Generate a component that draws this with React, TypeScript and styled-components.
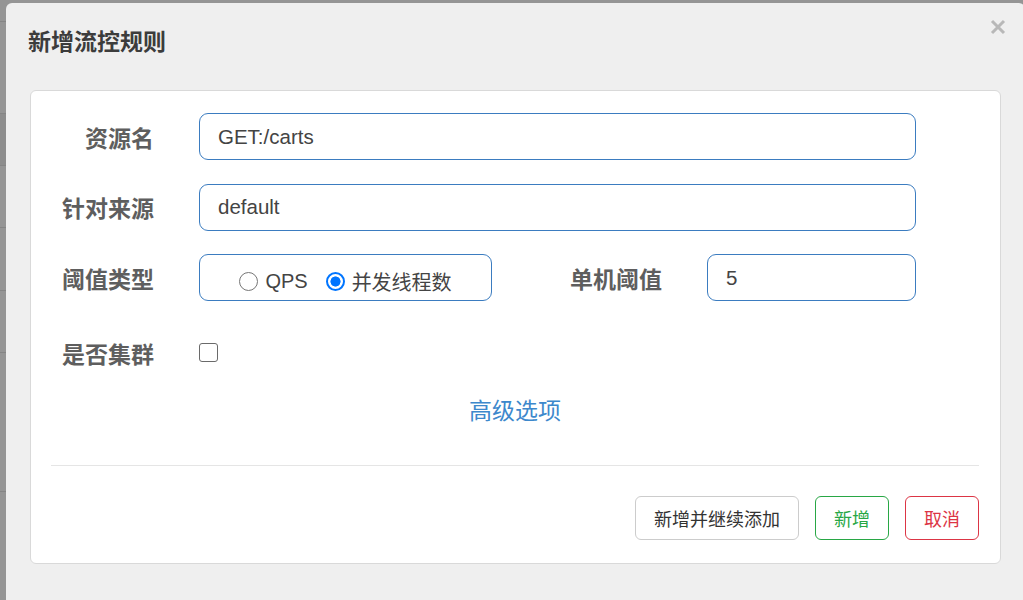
import React from 'react';
import styled, { createGlobalStyle } from 'styled-components';

const GlobalStyle = createGlobalStyle`
	html, body {
		margin: 0;
		padding: 0;
		width: 1023px;
		height: 600px;
		overflow: hidden;
		font-family: 'Liberation Sans', 'Noto Sans CJK SC', sans-serif;
	}
	* {
		box-sizing: border-box;
	}
`;

const Page = styled.div`
	position: relative;
	width: 1023px;
	height: 600px;
	overflow: hidden;
	background-color: #959595;
`;

// the dimmed table behind the modal
const Backdrop = styled.div`
	display: flex;
	flex-direction: column;
	height: 100%;
`;
const BgRow = styled.div<{ $h: number; $dark?: boolean }>`
	flex: 0 0 ${(p) => p.$h}px;
	border-bottom: 1px solid #858585;
	background-color: ${(p) => (p.$dark ? '#8d8d8d' : '#959595')};
`;

const Modal = styled.section`
	position: absolute;
	left: 6px;
	top: 3px;
	width: 1019px;
	height: 620px;
	background-color: #efefef;
	border-radius: 6px;
`;
const Header = styled.header`
	padding: 24px 22px;
	h2 {
		margin: 0;
		font-size: 23px;
		line-height: 30px;
		font-weight: 700;
		color: #3c3c3c;
	}
`;
const CloseBtn = styled.button`
	position: absolute;
	top: 14px;
	right: 17px;
	width: 20px;
	height: 20px;
	padding: 0;
	display: flex;
	justify-content: center;
	align-items: center;
	background-color: transparent;
	border: none;
	svg {
		width: 16px;
		height: 16px;
	}
`;
const Body = styled.div`
	padding: 9px 24px 0;
`;
const Card = styled.div`
	background-color: #fff;
	border: 1px solid #d9d9d9;
	border-radius: 6px;
	padding: 22px 21px 23px 20px;
`;
const Form = styled.div`
	display: flex;
	flex-direction: column;
	gap: 23.5px;
`;
const Row = styled.div<{ $h?: number }>`
	display: flex;
	align-items: center;
	height: ${(p) => p.$h || 47}px;
`;
const Label = styled.label<{ $w?: number; $gap?: number }>`
	flex: 0 0 ${(p) => p.$w || 103}px;
	margin-right: ${(p) => p.$gap || 45}px;
	text-align: right;
	font-size: 23px;
	font-weight: 700;
	color: #5e5e5e;
	white-space: nowrap;
`;
const Input = styled.input<{ $w?: number }>`
	flex: none;
	width: ${(p) => p.$w || 717}px;
	min-width: 0;
	height: 47px;
	padding: 0 18px;
	border: 1px solid #3b7cc0;
	border-radius: 9px;
	font-family: 'Liberation Sans', 'Noto Sans CJK SC', sans-serif;
	font-size: 20.5px;
	color: #444;
	outline: none;
`;
const RadioGroup = styled.div`
	flex: 0 0 293px;
	height: 47px;
	display: flex;
	justify-content: center;
	align-items: center;
	padding-top: 8px;
	border: 1px solid #3b7cc0;
	border-radius: 9px;
	font-size: 20px;
	color: #444;
`;
const RadioItem = styled.span`
	display: flex;
	align-items: center;
	gap: 7px;
	& + & {
		margin-left: 18px;
	}
`;
const RadioDot = styled.span<{ $checked?: boolean }>`
	display: inline-block;
	width: 19px;
	height: 19px;
	border-radius: 50%;
	border: ${(p) => (p.$checked ? '2px solid #0075ff' : '1.5px solid #767676')};
	background: ${(p) =>
		p.$checked ? 'radial-gradient(circle, #0075ff 0 4.8px, #fff 5.3px)' : '#fff'};
`;
const Checkbox = styled.span`
	display: inline-block;
	width: 19px;
	height: 19px;
	border: 1.5px solid #6a6a6a;
	border-radius: 3px;
	background-color: #fff;
`;
const AdvancedLink = styled.a`
	display: block;
	height: 60px;
	line-height: 60px;
	text-align: center;
	font-size: 23px;
	color: #3d88cc;
	text-decoration: none;
`;
const Hr = styled.hr`
	margin: 24.5px 0 0;
	border: none;
	border-top: 1px solid #e5e5e5;
`;
const Footer = styled.div`
	display: flex;
	justify-content: flex-end;
	gap: 16px;
	margin-top: 30px;
`;
const Button = styled.button<{ $tone?: 'default' | 'success' | 'danger' }>`
	height: 44px;
	padding: 0 18px;
	background-color: #fff;
	border-radius: 6px;
	font-family: 'Liberation Sans', 'Noto Sans CJK SC', sans-serif;
	font-size: 18px;
	border: 1px solid
		${(p) => (p.$tone === 'success' ? '#28a745' : p.$tone === 'danger' ? '#dc3545' : '#cccccc')};
	color: ${(p) => (p.$tone === 'success' ? '#28a745' : p.$tone === 'danger' ? '#dc3545' : '#333')};
`;

const bgRows = [
	{ h: 22 },
	{ h: 92 },
	{ h: 52, dark: true },
	{ h: 62 },
	{ h: 63 },
	{ h: 62 },
	{ h: 139 },
	{ h: 110 },
];

const App = () => {
	return (
		<>
			<GlobalStyle />
			<Page>
				<Backdrop>
					{bgRows.map((r, i) => (
						<BgRow key={i} $h={r.h} $dark={r.dark} />
					))}
				</Backdrop>
				<Modal>
					<Header>
						<h2>新增流控规则</h2>
					</Header>
					<CloseBtn aria-label="close">
						<svg viewBox="0 0 16 16">
							<path d="M2 2 L14 14 M14 2 L2 14" stroke="#b8b8b8" strokeWidth="3" />
						</svg>
					</CloseBtn>
					<Body>
						<Card>
							<Form>
								<Row>
									<Label>资源名</Label>
									<Input defaultValue="GET:/carts" />
								</Row>
								<Row>
									<Label>针对来源</Label>
									<Input defaultValue="default" />
								</Row>
								<Row>
									<Label>阈值类型</Label>
									<RadioGroup>
										<RadioItem>
											<RadioDot />
											QPS
										</RadioItem>
										<RadioItem>
											<RadioDot $checked />
											并发线程数
										</RadioItem>
									</RadioGroup>
									<Label $w={170}>单机阈值</Label>
									<Input $w={209} defaultValue="5" />
								</Row>
								<Row $h={56}>
									<Label>是否集群</Label>
									<Checkbox />
								</Row>
							</Form>
							<AdvancedLink href="#">高级选项</AdvancedLink>
							<Hr />
							<Footer>
								<Button>新增并继续添加</Button>
								<Button $tone="success">新增</Button>
								<Button $tone="danger">取消</Button>
							</Footer>
						</Card>
					</Body>
				</Modal>
			</Page>
		</>
	);
};

export default App;
